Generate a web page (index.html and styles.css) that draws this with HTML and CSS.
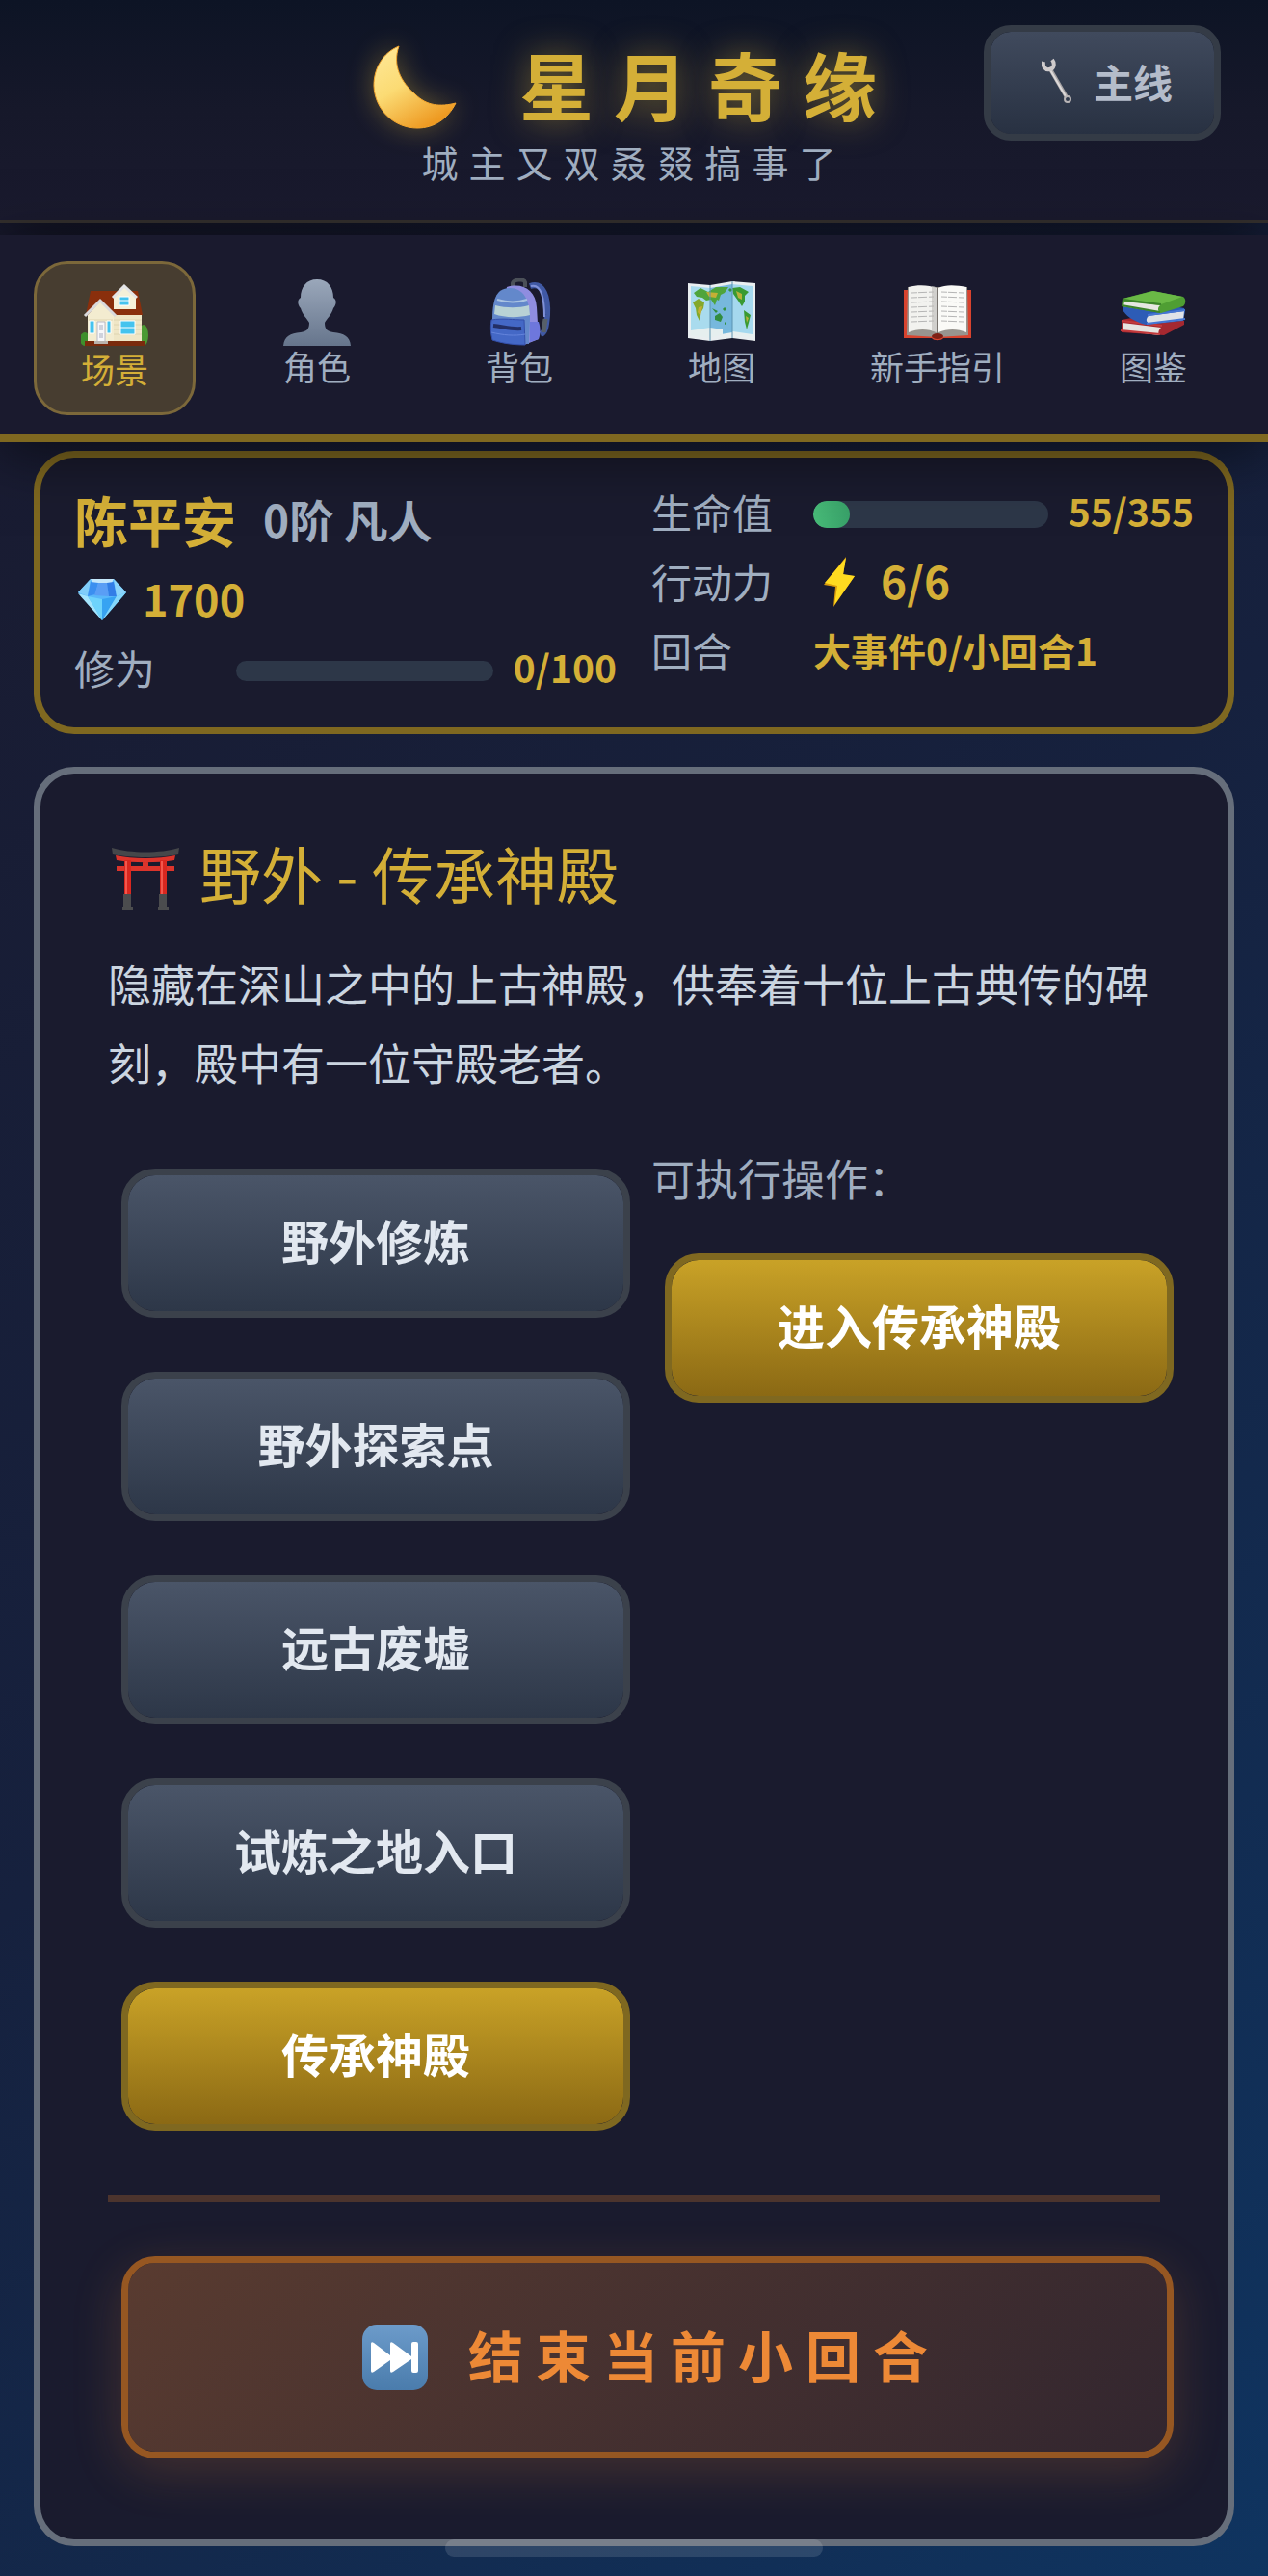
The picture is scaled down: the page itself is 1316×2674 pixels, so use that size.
FILE: index.html
```
<!DOCTYPE html>
<html lang="zh-CN">
  <head>
    <meta charset="UTF-8" />
    <meta name="viewport" content="width=device-width, initial-scale=1.0" />
    <title>星月奇缘</title>
    <link rel="stylesheet" href="styles.css">
  </head>

  <body>
    <!-- header -->
    <header class="header">
      <h1 class="title">
        <svg class="moon" viewBox="0 0 95 95" aria-hidden="true">
          <defs>
            <linearGradient id="moonFill" x1="0" y1="0" x2="0.6" y2="1">
              <stop offset="0" stop-color="#ffe99a" />
              <stop offset="0.5" stop-color="#fbdb74" />
              <stop offset="1" stop-color="#ee9a22" />
            </linearGradient>
          </defs>
          <path d="M29 5 C12 12 3 28 3 46 C4 72 25 90 48 90 C66 90 80 80 88 64 C72 68 58 67 46 55 C31 42 22 25 29 5 Z" fill="url(#moonFill)" stroke="#f3a52e" stroke-width="1" />
        </svg>
        <span>星月奇缘</span>
      </h1>
      <p class="subtitle">城主又双叒叕搞事了</p>
      <button class="main-line" type="button">
        <svg class="wrench" viewBox="0 0 32 48" aria-hidden="true">
          <path d="M8 10 L26 41" stroke="#a9a5a6" stroke-width="4" fill="none" />
          <path d="M8 11 L25 40" stroke="#dedada" stroke-width="2" fill="none" />
          <path d="M2 4 C1 9 4 13 8 12 C13 12 14 6 11 2" fill="none" stroke="#cfcbcc" stroke-width="4" />
          <circle cx="27" cy="43" r="3" fill="none" stroke="#b9b5b6" stroke-width="2" />
        </svg>
        主线
      </button>
    </header>

    <!-- nav -->
    <nav class="nav">
      <a href="#scene" class="nav-item active">
        <svg class="nav-icon" viewBox="0 0 70 70" aria-hidden="true">
          <ellipse cx="4" cy="60" rx="5" ry="7" fill="#3f8f2c" />
          <ellipse cx="65" cy="56" rx="5" ry="11" fill="#4c9a33" />
          <path d="M10 10 H59 L64 35 H5 Z" fill="#8a2f0c" />
          <path d="M7 35 L20 21 L34 35 V62 H7 Z" fill="#f3ecd0" />
          <path d="M34 35 H63 V62 H34 Z" fill="#efe6c6" />
          <path d="M34 40 H63 M34 45 H63 M34 50 H63 M34 55 H63 M8 40 H33" stroke="#ded4b0" stroke-width="1" />
          <path d="M34 15 L45 5 L57 15 V29 H34 Z" fill="#f6f0d8" />
          <path d="M4 36 L20 20 L36 36" fill="none" stroke="#d9d9dc" stroke-width="3" />
          <path d="M33 17 L45 5 L58 17" fill="none" stroke="#e4e4e6" stroke-width="3" />
          <path d="M40 16 H50 V25 H40 Z M41 41 H56 V55 H41 Z M9 41 H14 V54 H9 Z M27 41 H31 V54 H27 Z" fill="#45c3ee" stroke="#fff" stroke-width="1" />
          <path d="M40 20 H50 M41 48 H56" stroke="#fff" stroke-width="1" />
          <path d="M17 42 H25 V63 H17 Z" fill="#f7f7fa" stroke="#b9b9c4" stroke-width="1" />
          <path d="M19 45 H23 V51 H19 Z M19 54 H23 V59 H19 Z" fill="#cfd2dc" />
          <path d="M4 62 H66 V67 H4 Z" fill="#7a2b0d" />
          <path d="M14 62 H28 V65 H14 Z" fill="#b9b4ae" />
        </svg>
        <span>场景</span>
      </a>
      <a href="#role" class="nav-item">
        <svg class="nav-icon" viewBox="0 0 70 70" aria-hidden="true">
          <defs>
            <linearGradient id="personFill" x1="0" y1="0" x2="0" y2="1">
              <stop offset="0" stop-color="#9aa7ba" />
              <stop offset="1" stop-color="#66758c" />
            </linearGradient>
          </defs>
          <path d="M35 1 C24 1 18 9 18 20 C14 22 15 28 18 31 C20 38 25 42 27 46 C27 52 25 55 18 56 C7 57 1 60 0 70 H70 C69 60 63 57 52 56 C45 55 43 52 43 46 C45 42 50 38 52 31 C55 28 56 22 52 20 C52 9 46 1 35 1 Z" fill="url(#personFill)" />
        </svg>
        <span>角色</span>
      </a>
      <a href="#bag" class="nav-item">
        <svg class="nav-icon" viewBox="0 0 70 70" aria-hidden="true">
          <path d="M28 10 V5 C29 1 40 0 41 4 V9" fill="none" stroke="#4b5058" stroke-width="4" />
          <path d="M46 8 C60 3 65 20 64 38 C63 50 62 56 57 58" fill="none" stroke="#4059a4" stroke-width="6" />
          <path d="M47 8 C58 5 61 22 61 40" fill="none" stroke="#7f91d8" stroke-width="2" />
          <path d="M62 42 L60 56" stroke="#565f68" stroke-width="5" />
          <path d="M22 9 C38 4 52 12 53 30 L55 63 L40 69 L12 65 Z" fill="#8f8de0" />
          <path d="M7 44 C7 24 10 10 25 10 C39 10 46 22 46 42 L45 68 L12 65 Z" fill="#6388cb" />
          <path d="M10 28 C22 31 34 31 45 28 L46 38 C34 41 20 41 9 37 Z" fill="#b8d2d5" />
          <path d="M12 22 C22 25 34 25 43 22" fill="none" stroke="#a9c3e2" stroke-width="2" />
          <path d="M46 45 H55 C57 51 57 58 55 63 L46 66 Z" fill="#6e77dc" />
          <path d="M6 43 C18 41 29 43 40 43 L41 69 C28 69 16 67 7 64 C5 57 5 49 6 43 Z" fill="#4468c6" stroke="#344faa" stroke-width="1" />
          <path d="M8 49 C18 50 27 53 37 52" fill="none" stroke="#232f66" stroke-width="4" />
          <path d="M6 56 C18 59 30 60 41 58" fill="none" stroke="#6484dc" stroke-width="1" />
        </svg>
        <span>背包</span>
      </a>
      <a href="#map" class="nav-item">
        <svg class="nav-icon" viewBox="0 0 70 70" aria-hidden="true">
          <path d="M0 5 L23 7 L46 3 L70 5 V65 L46 62 L23 65 L0 62 Z" fill="#e9eef0" />
          <path d="M3 8 L23 10 V56 L3 59 Z" fill="#a9dbee" />
          <path d="M23 10 L46 6 V56 L23 60 Z" fill="#77b8dd" />
          <path d="M46 6 L67 8 V60 L46 56 Z" fill="#a5d8ee" />
          <path d="M3 54 L23 51 L36 53 V58 L23 62 L3 59 Z M46 55 L67 58 V61 L46 59 Z" fill="#e6efef" />
          <path d="M6 15 L13 10 L21 14 L29 9 L42 9 L38 15 L34 17 L32 23 L30 22 L28 28 L24 22 L19 23 L15 20 L9 19 Z" fill="#4fa43b" />
          <path d="M5 25 L11 21 L17 25 L16 31 L13 36 L12 44 L9 38 L8 31 Z" fill="#84a82b" />
          <path d="M19 14 L31 15 L29 20 L22 19 Z M11 30 L15 29 L13 39 L10 35 Z" fill="#c5af34" />
          <path d="M28 39 L33 36 L36 40 L34 45 L28 43 Z M25 31 L31 34 L29 36 Z M38 45 L40 47 L38 48 Z" fill="#328d3f" />
          <path d="M46 10 L54 9 L63 14 L59 18 L59 24 L56 29 L52 23 L47 16 Z M58 33 L65 38 L63 46 L61 53 L59 45 Z" fill="#399a32" />
          <path d="M50 13 L56 16 L56 22 L52 20 Z M60 39 L63 41 L61 46 Z" fill="#b7b03a" />
          <path d="M43 13 L45 11 M37 31 L39 33" stroke="#34913d" stroke-width="3" />
          <path d="M23 7 V65 M46 3 V62" stroke="#5d93b0" stroke-width="1" />
        </svg>
        <span>地图</span>
      </a>
      <a href="#guide" class="nav-item">
        <svg class="nav-icon" viewBox="0 0 70 70" aria-hidden="true">
          <path d="M0 12 H70 V62 H41 C39 65 31 65 29 62 H0 Z" fill="#d8432e" />
          <path d="M4 9 L34 9 L35 61 L3 59 Z M36 9 H66 L67 59 L35 61 Z" fill="#98958f" />
          <path d="M5 9 C15 6 27 7 34 10 V56 C25 52 14 52 5 56 Z" fill="#f2f2ef" />
          <path d="M36 10 C43 6 55 7 65 9 V56 C56 52 45 52 36 56 Z" fill="#fafaf7" />
          <path d="M8 15 L31 14 M8 20 L31 19 M8 25 L31 24 M8 30 L31 29 M8 35 L31 34 M8 40 L31 39 M8 45 L31 44 M39 14 L62 15 M39 19 L62 20 M39 24 L62 25 M39 29 L62 30 M39 34 L62 35 M39 39 L62 40 M39 44 L62 45" stroke="#b5b5b5" stroke-width="1" stroke-dasharray="6 1 9 2" />
          <path d="M31 8 C34 9 34 11 34 14 V57 C33 56 31 55 29 54 V8 Z" fill="#bbb9b5" opacity="0.6" />
          <path d="M35 9 V58" stroke="#77736e" stroke-width="2" />
          <ellipse cx="35" cy="60" rx="6" ry="3" fill="#7f2015" />
        </svg>
        <span>新手指引</span>
      </a>
      <a href="#codex" class="nav-item">
        <svg class="nav-icon" viewBox="0 0 70 70" aria-hidden="true">
          <path d="M2 43 L28 38 L67 44 V48 L46 59 L2 56 Z" fill="#a52830" />
          <path d="M3 46 L43 51 C40 54 40 57 41 59 L3 54 Z" fill="#e6e4e0" />
          <path d="M2 44 L44 49 M1 54 L42 58" stroke="#c33a3c" stroke-width="2" />
          <path d="M3 27 L30 24 L67 31 L68 34 L66 44 L27 48 C15 45 5 38 3 32 Z" fill="#2d5cb6" />
          <path d="M30 39 L67 34 L66 43 L31 47 C27 45 27 42 30 39 Z" fill="#dfe2e7" />
          <path d="M29 38 L68 33 M28 47 L68 42" stroke="#4576d4" stroke-width="2" />
          <path d="M3 21 L34 13 L66 19 C69 21 69 26 66 29 L43 36 L2 29 Z" fill="#4f9e33" />
          <path d="M4 21 L35 13 L65 19 L43 27 Z" fill="#6ab946" />
          <path d="M5 24 L42 28 C39 31 40 33 41 35 L4 29 Z" fill="#e6e7e1" />
          <path d="M3 22 L43 27 M2 28 L42 35" stroke="#3c832a" stroke-width="2" />
        </svg>
        <span>图鉴</span>
      </a>
    </nav>

    <main class="content">
      <!-- player status -->
      <section class="status-card">
        <div class="status-left">
          <div class="player">
            <span class="player-name">陈平安</span>
            <span class="player-rank">0阶 凡人</span>
          </div>
          <div class="gems">
            <svg class="gem" viewBox="0 0 52 44" aria-hidden="true">
              <path d="M14 1 H38 L51 15 L26 44 L1 15 Z" fill="#58b7fa" />
              <path d="M14 1 H38 L36 5 H16 Z" fill="#c4e7fb" />
              <path d="M14 1 L1 15 L11 19 Z" fill="#80cdf9" />
              <path d="M14 4 L11 19 L19 17 L22 5 Z" fill="#3b8ff0" />
              <path d="M22 5 H31 L33 19 L18 18 Z" fill="#5a9ef5" />
              <path d="M31 5 L38 4 L41 19 L33 19 Z" fill="#327de6" />
              <path d="M38 1 L51 15 L41 19 Z" fill="#8bd4fb" />
              <path d="M1 16 L11 19 L26 44 Z" fill="#a4e4fc" />
              <path d="M11 19 L26 22 V44 Z" fill="#6ed3fc" />
              <path d="M26 22 L41 19 L26 44 Z" fill="#37a3f2" />
              <path d="M41 19 L51 15 L26 44 Z" fill="#84d7fb" />
            </svg>
            <span>1700</span>
          </div>
          <div class="stat">
            <span class="stat-label">修为</span>
            <div class="bar bar-thin"></div>
            <span class="stat-value">0/100</span>
          </div>
        </div>
        <div class="status-right">
          <div class="stat">
            <span class="stat-label">生命值</span>
            <div class="bar"><div class="bar-fill" style="width: 15.5%"></div></div>
            <span class="stat-value">55/355</span>
          </div>
          <div class="stat">
            <span class="stat-label">行动力</span>
            <svg class="bolt" viewBox="0 0 52 52" aria-hidden="true">
              <path d="M34 0 L11 29 L23 31 L21 52 L43 20 L31 19 Z" fill="#d89a0c" />
              <path d="M34 1 L12 27 L25 30 L22 50 L43 20 L31 18 Z" fill="#ffdb20" />
            </svg>
            <span class="action-value">6/6</span>
          </div>
          <div class="stat">
            <span class="stat-label">回合</span>
            <span class="stat-text">大事件0/小回合1</span>
          </div>
        </div>
      </section>

      <!-- scene -->
      <section class="scene-card">
        <h2 class="scene-title">
          <svg class="torii" viewBox="0 0 70 66" aria-hidden="true">
            <path d="M0 1 C20 7 50 7 70 1 L69 8 C50 12 20 12 1 8 Z" fill="#45474a" />
            <path d="M4 9 C22 13 48 13 66 9 L65 14 C48 17 22 17 5 14 Z M5 20 H65 V25 H5 Z M32 14 H38 V21 H32 Z" fill="#dc342b" />
            <path d="M13 14 H20 V50 H13 Z M50 14 H57 V50 H50 Z" fill="#d9271f" />
            <path d="M15 15 V49 M52 15 V49" stroke="#f3574c" stroke-width="2" />
            <path d="M12 49 H20 V62 H22 V66 H11 V62 H12 Z M49 49 H57 V62 H59 V66 H48 V62 H49 Z" fill="#4b4c4e" />
          </svg>
          <span>野外 - 传承神殿</span>
        </h2>
        <p class="scene-desc">隐藏在深山之中的上古神殿，供奉着十位上古典传的碑刻，殿中有一位守殿老者。</p>

        <div class="columns">
          <div class="places">
            <button class="btn" type="button">野外修炼</button>
            <button class="btn" type="button">野外探索点</button>
            <button class="btn" type="button">远古废墟</button>
            <button class="btn" type="button">试炼之地入口</button>
            <button class="btn btn-gold" type="button">传承神殿</button>
          </div>
          <div class="actions">
            <p class="actions-label">可执行操作：</p>
            <button class="btn btn-gold" type="button">进入传承神殿</button>
          </div>
        </div>

        <div class="turn">
          <button class="btn-end" type="button">
            <svg class="next" viewBox="0 0 68 68" aria-hidden="true">
              <defs>
                <linearGradient id="nextFill" x1="0" y1="0" x2="0" y2="1">
                  <stop offset="0" stop-color="#6c9bca" />
                  <stop offset="1" stop-color="#4a7cac" />
                </linearGradient>
              </defs>
              <rect x="0" y="0" width="68" height="68" rx="15" fill="url(#nextFill)" />
              <path d="M9 20 Q9 17 12 19 L29 32 V20 Q29 17 32 19 L51 33 V20 Q51 18 53 18 H56 Q58 18 58 20 V48 Q58 50 56 50 H53 Q51 50 51 48 V36 L32 49 Q29 51 29 48 V37 L12 49 Q9 51 9 48 Z" fill="#fff" />
            </svg>
            <span>结束当前小回合</span>
          </button>
        </div>
      </section>
    </main>

    <div class="home-bar"></div>
  </body>
</html>
```

FILE: styles.css
```
* {
  box-sizing: border-box;
}

body {
  margin: 0;
  min-height: 100vh;
  font-family: "Noto Sans CJK SC", "Noto Sans", sans-serif;
  color: #cbd5e0;
  background: linear-gradient(135deg, #1a1a2e 0%, #16213e 50%, #0f3460 100%);
}

h1,
h2,
p {
  margin: 0;
}

button {
  font-family: inherit;
  cursor: pointer;
}

a {
  text-decoration: none;
}

svg {
  display: block;
  flex-shrink: 0;
}

/* header */
.header {
  position: relative;
  padding: 40px 0 32px;
  text-align: center;
  background: linear-gradient(180deg, #0d1425 0%, #16182a 50%, #1a1a2e 100%);
  border-bottom: 3px solid #332f2d;
  box-shadow: 0 14px 70px rgba(0, 0, 0, 0.5);
}

.title {
  display: flex;
  justify-content: center;
  align-items: center;
  gap: 59px;
  font-size: 77px;
  line-height: 94px;
  letter-spacing: 21px;
  color: #d4af37;
  text-shadow: 0 0 35px rgba(212, 175, 55, 0.5);
}

.title span {
  padding-bottom: 6px;
}

.moon {
  width: 95px;
  height: 95px;
  filter: drop-shadow(0 0 14px rgba(212, 175, 55, 0.4));
}

.subtitle {
  font-size: 38px;
  line-height: 56px;
  letter-spacing: 11px;
  color: #a0aec0;
}

.main-line {
  position: absolute;
  top: 26px;
  right: 49px;
  display: flex;
  justify-content: center;
  align-items: center;
  gap: 22px;
  width: 246px;
  height: 120px;
  padding: 0 0 4px 10px;
  font-size: 41px;
  font-weight: bold;
  color: #b4bcca;
  background: linear-gradient(180deg, #404a5d, #283142) padding-box;
  border: 7px solid #343b46;
  border-radius: 28px;
}

.wrench {
  width: 32px;
  height: 48px;
}

/* nav */
.nav {
  position: relative;
  display: flex;
  justify-content: space-between;
  align-items: flex-start;
  margin-top: 13px;
  padding: 27px 35px 20px;
  background: #1a1a2e;
  border-bottom: 8px solid #7f6820;
  box-shadow: 0 14px 56px rgba(0, 0, 0, 0.5);
}

.nav-item {
  display: flex;
  flex-direction: column;
  align-items: center;
  min-width: 168px;
  height: 160px;
  padding: 18px 28px 0;
  font-size: 35px;
  line-height: 42px;
  color: #a0aec0;
}

.nav-item.active {
  color: #d4af37;
  background: #473d30;
  border: 3px solid #7c683a;
  border-radius: 35px;
}

.nav-icon {
  width: 70px;
  height: 70px;
}

.content {
  padding: 9px 35px 31px;
}

/* player status */
.status-card {
  display: grid;
  grid-template-columns: 1fr 1fr;
  gap: 36px;
  padding: 28px 35px 32px;
  background: #1a1b2e;
  border: 7px solid #7f6820;
  border-radius: 42px;
}

.player {
  display: flex;
  align-items: center;
  gap: 28px;
  height: 76px;
}

.player-name,
.player-rank {
  padding-bottom: 6px;
  font-weight: bold;
}

.player-name {
  font-size: 56px;
  color: #d4af37;
}

.player-rank {
  font-size: 46px;
  color: #a0aec0;
}

.gems {
  display: flex;
  align-items: center;
  gap: 16px;
  height: 86px;
  padding-left: 3px;
  font-size: 45px;
  font-weight: bold;
  color: #d4af37;
}

.gems span {
  padding-bottom: 4px;
}

.gem {
  width: 52px;
  height: 44px;
}

.status-right {
  display: flex;
  flex-direction: column;
  gap: 14px;
}

.stat {
  display: flex;
  align-items: center;
  height: 58px;
}

.stat-label,
.stat-value,
.stat-text,
.action-value {
  padding-bottom: 4px;
}

.stat-label {
  width: 168px;
  font-size: 42px;
  color: #a0aec0;
}

.bar {
  flex: 1;
  height: 28px;
  margin-top: 4px;
  overflow: hidden;
  background: #2d3748;
  border-radius: 14px;
}

.bar-thin {
  height: 21px;
}

.bar-fill {
  height: 100%;
  background: linear-gradient(90deg, #48bb78, #38a169);
  border-radius: 14px;
}

.stat-value,
.stat-text {
  font-size: 39px;
  font-weight: bold;
  color: #d4af37;
}

.stat-value {
  margin-left: 21px;
}

.bolt {
  width: 52px;
  height: 52px;
}

.action-value {
  margin-left: 18px;
  font-size: 46px;
  font-weight: bold;
  color: #d4af37;
}

/* scene */
.scene-card {
  margin-top: 34px;
  padding: 70px;
  background: #1a1b2e;
  border: 7px solid #666e7b;
  border-radius: 42px;
}

.scene-title {
  display: flex;
  align-items: center;
  gap: 21px;
  height: 70px;
  padding-left: 4px;
  font-size: 64px;
  font-weight: normal;
  line-height: 70px;
  color: #d4af37;
}

.scene-title span {
  padding-bottom: 6px;
}

.torii {
  width: 70px;
  height: 66px;
  margin-top: 8px;
}

.scene-desc {
  margin-top: 37px;
  font-size: 45px;
  line-height: 82px;
  color: #cbd5e0;
}

.columns {
  display: grid;
  grid-template-columns: 1fr 1fr;
  gap: 36px;
  margin-top: 55px;
}

.places {
  display: flex;
  flex-direction: column;
  gap: 28px;
}

.actions-label {
  margin-bottom: 54px;
  font-size: 45px;
  line-height: 48px;
  color: #a0aec0;
}

.btn {
  display: block;
  width: 100%;
  height: 155px;
  margin: 14px;
  padding: 0 0 8px;
  font-size: 49px;
  font-weight: bold;
  color: #e2e8f0;
  background: linear-gradient(180deg, #4a5568, #2d3748) padding-box;
  border: 7px solid #3b414b;
  border-radius: 35px;
}

.btn-gold {
  color: #fff;
  background: linear-gradient(180deg, #c9a227, #8b6914) padding-box;
  border-color: #7f6820;
}

.turn {
  margin-top: 53px;
  padding-top: 42px;
  border-top: 7px solid #4c342d;
}

.btn-end {
  display: flex;
  justify-content: center;
  align-items: center;
  gap: 42px;
  width: 100%;
  height: 210px;
  margin: 14px;
  padding: 0 0 0 8px;
  font-size: 57px;
  font-weight: bold;
  letter-spacing: 13px;
  color: #ed8936;
  background: linear-gradient(135deg, #593b30, #32262f) padding-box;
  border: 7px solid #965722;
  border-radius: 35px;
  box-shadow: 0 14px 52px rgba(237, 137, 54, 0.2);
}

.btn-end span {
  padding-bottom: 8px;
}

.next {
  width: 68px;
  height: 68px;
}

.home-bar {
  position: fixed;
  bottom: 20px;
  left: 50%;
  width: 392px;
  height: 18px;
  margin-left: -196px;
  background: rgba(255, 255, 255, 0.12);
  border-radius: 9px;
}
```
